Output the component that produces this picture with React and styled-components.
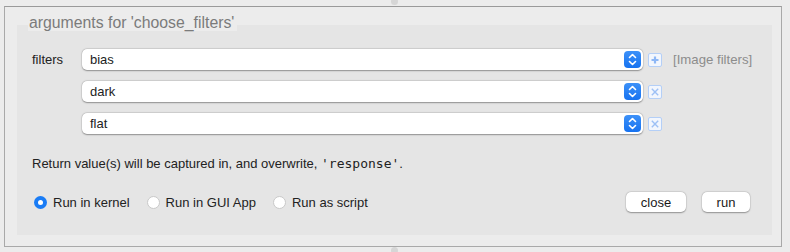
import React from 'react';
import styled, { createGlobalStyle } from 'styled-components';

const GlobalStyle = createGlobalStyle`
  html, body {
    margin: 0;
    background: #ececec;
    font-family: "Liberation Sans", Arial, sans-serif;
    color: #222;
  }
`;

const Page = styled.div`
  position: relative;
  width: 790px;
  height: 252px;
  padding: 6px 8px 5px 4px;
  box-sizing: border-box;
`;

const Grip = styled.div`
  position: absolute;
  left: 391px;
  top: ${(props) => props.top}px;
  width: 7px;
  height: 7px;
  border-radius: 50%;
  background: #d6d6d6;
`;

const Frame = styled.div`
  height: 100%;
  box-sizing: border-box;
  border: 1px solid #a9a9a9;
  border-top-color: #9a9a9a;
  padding: 18px 9px 11px 12px;
`;

const Panel = styled.div`
  position: relative;
  height: 100%;
  box-sizing: border-box;
  background: #e5e5e5;
  padding: 24px 0 0 15px;
  display: flex;
  flex-direction: column;
`;

const Legend = styled.div`
  position: absolute;
  left: 11px;
  top: -11px;
  padding: 0 3px 0 1px;
  background: #ececec;
  color: #7b7b7b;
  font-size: 15.8px;
  line-height: 17px;
`;

const Rows = styled.div`
  display: flex;
  flex-direction: column;
  gap: 11px;
`;

const Row = styled.div`
  display: flex;
  align-items: center;
  height: 21px;
`;

const Label = styled.div`
  width: 50px;
  font-size: 13px;
`;

const Select = styled.div`
  width: 561px;
  height: 21px;
  box-sizing: border-box;
  margin-left: ${(props) => (props.indent ? 50 : 0)}px;
  background: #fff;
  border-radius: 5px;
  box-shadow: 0 0.5px 1.5px rgba(0, 0, 0, 0.35), 0 0 0 0.5px rgba(0, 0, 0, 0.08);
  display: flex;
  align-items: center;
  justify-content: space-between;
  padding: 0 2px 0 8px;
  font-size: 13px;
`;

const Stepper = styled.div`
  width: 17px;
  height: 17px;
  border-radius: 4px;
  background: linear-gradient(#3d91f8, #1672f0);
  display: flex;
  align-items: center;
  justify-content: center;
`;

const SmallButton = styled.div`
  width: 14px;
  height: 14px;
  box-sizing: border-box;
  margin-left: 5px;
  border: 1px solid #b4cff7;
  border-radius: 2px;
  background: #f2f6fd;
  display: flex;
  align-items: center;
  justify-content: center;
`;

const Hint = styled.div`
  margin-left: 11px;
  font-size: 13.2px;
  color: #8c8c8c;
`;

const Note = styled.div`
  margin-top: 22px;
  font-size: 13px;
  line-height: 16px;
`;

const Mono = styled.span`
  font-family: "DejaVu Sans Mono", "Liberation Mono", monospace;
  font-size: 13px;
`;

const Footer = styled.div`
  margin-top: 20px;
  display: flex;
  align-items: center;
  padding-right: 22px;
`;

const RadioGroup = styled.div`
  display: flex;
  align-items: center;
  gap: 17px;
  flex: 1;
  padding-left: 2px;
`;

const RadioOption = styled.label`
  display: flex;
  align-items: center;
  gap: 6px;
  font-size: 13px;
`;

const RadioDot = styled.span`
  width: 13px;
  height: 13px;
  box-sizing: border-box;
  border-radius: 50%;
  display: flex;
  align-items: center;
  justify-content: center;
  background: ${(props) => (props.checked ? '#1a7cf5' : '#fff')};
  border: ${(props) => (props.checked ? 'none' : '1px solid #c9c9c9')};
  &::after {
    content: '';
    display: ${(props) => (props.checked ? 'block' : 'none')};
    width: 5px;
    height: 5px;
    border-radius: 50%;
    background: #fff;
  }
`;

const Button = styled.div`
  width: ${(props) => props.width}px;
  height: 20px;
  margin-left: ${(props) => props.gap || 0}px;
  background: #fff;
  border-radius: 5px;
  box-shadow: 0 0.5px 1.5px rgba(0, 0, 0, 0.35), 0 0 0 0.5px rgba(0, 0, 0, 0.06);
  display: flex;
  align-items: center;
  justify-content: center;
  font-size: 13px;
  color: #1a1a1a;
`;

function StepperIcon() {
  return (
    <Stepper>
      <svg width="9" height="13" viewBox="0 0 9 13">
        <path d="M1.5 4.5 L4.5 1.5 L7.5 4.5 M1.5 8.5 L4.5 11.5 L7.5 8.5" fill="none" stroke="#fff" strokeWidth="1.6" strokeLinecap="round" strokeLinejoin="round" />
      </svg>
    </Stepper>
  );
}

function FilterSelect({ value, indent }) {
  return (
    <Select indent={indent}>
      <span>{value}</span>
      <StepperIcon />
    </Select>
  );
}

const filters = ['bias', 'dark', 'flat'];

export default function App() {
  return (
    <>
      <GlobalStyle />
      <Page>
        <Grip top={-2} />
        <Frame>
          <Panel>
            <Legend>arguments for 'choose_filters'</Legend>
            <Rows>
              {filters.map((f, i) => (
                <Row key={f}>
                  {i === 0 && <Label>filters</Label>}
                  <FilterSelect value={f} indent={i !== 0} />
                  <SmallButton>
                    {i === 0 ? (
                      <svg width="10" height="10" viewBox="0 0 10 10">
                        <path d="M5 1.5 V8.5 M1.5 5 H8.5" stroke="#8db7f6" strokeWidth="2.2" />
                      </svg>
                    ) : (
                      <svg width="10" height="10" viewBox="0 0 10 10">
                        <path d="M1.8 1.8 L8.2 8.2 M8.2 1.8 L1.8 8.2" stroke="#9dc0f5" strokeWidth="1.4" />
                      </svg>
                    )}
                  </SmallButton>
                  {i === 0 && <Hint>[Image filters]</Hint>}
                </Row>
              ))}
            </Rows>
            <Note>
              Return value(s) will be captured in, and overwrite, <Mono>'response'</Mono>.
            </Note>
            <Footer>
              <RadioGroup>
                <RadioOption><RadioDot checked />Run in kernel</RadioOption>
                <RadioOption><RadioDot />Run in GUI App</RadioOption>
                <RadioOption><RadioDot />Run as script</RadioOption>
              </RadioGroup>
              <Button width={60}>close</Button>
              <Button width={48} gap={16}>run</Button>
            </Footer>
          </Panel>
        </Frame>
        <Grip top={247} />
      </Page>
    </>
  );
}
